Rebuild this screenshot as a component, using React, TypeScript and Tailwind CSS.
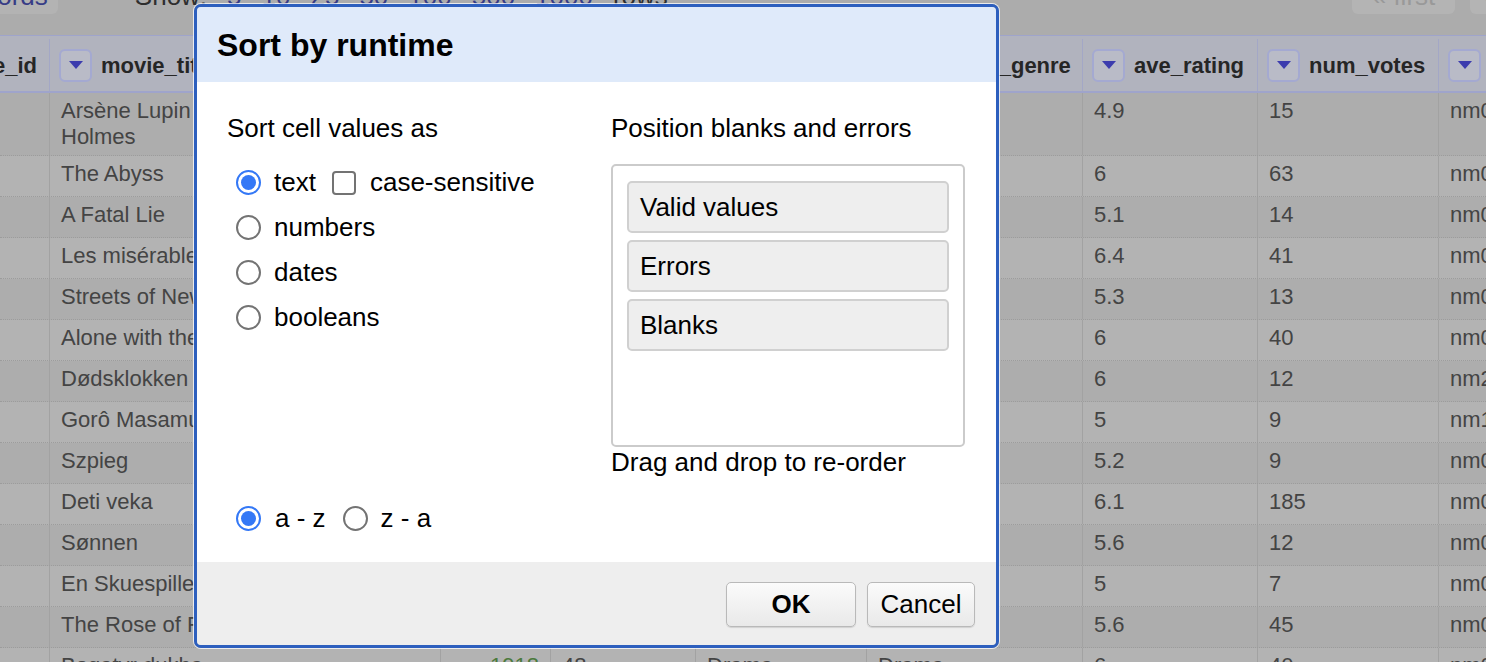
import React from 'react';

type Row = {
  title: string[];
  year: string;
  runtime: string;
  genre: string;
  primary: string;
  rating: string;
  votes: string;
  director: string;
};

const rows: Row[] = [
  { title: ['Arsène Lupin contra Sherlock', 'Holmes'], year: '1910', runtime: '50', genre: 'Crime', primary: 'Crime', rating: '4.9', votes: '15', director: 'nm0095714' },
  { title: ['The Abyss'], year: '1910', runtime: '45', genre: 'Drama', primary: 'Drama', rating: '6', votes: '63', director: 'nm0296651' },
  { title: ['A Fatal Lie'], year: '1911', runtime: '40', genre: 'Drama', primary: 'Drama', rating: '5.1', votes: '14', director: 'nm0088881' },
  { title: ['Les misérables'], year: '1913', runtime: '163', genre: 'Drama', primary: 'Drama', rating: '6.4', votes: '41', director: 'nm0141150' },
  { title: ['Streets of New York'], year: '1913', runtime: '50', genre: 'Drama', primary: 'Drama', rating: '5.3', votes: '13', director: 'nm0436187' },
  { title: ['Alone with the Devil'], year: '1914', runtime: '55', genre: 'Drama', primary: 'Drama', rating: '6', votes: '40', director: 'nm0052839' },
  { title: ['Dødsklokken'], year: '1914', runtime: '48', genre: 'Drama', primary: 'Drama', rating: '6', votes: '12', director: 'nm2181024' },
  { title: ['Gorô Masamune'], year: '1915', runtime: '60', genre: 'Action', primary: 'Action', rating: '5', votes: '9', director: 'nm1046797' },
  { title: ['Szpieg'], year: '1916', runtime: '40', genre: 'Drama', primary: 'Drama', rating: '5.2', votes: '9', director: 'nm0543003' },
  { title: ['Deti veka'], year: '1915', runtime: '48', genre: 'Drama', primary: 'Drama', rating: '6.1', votes: '185', director: 'nm0071779' },
  { title: ['Sønnen'], year: '1916', runtime: '52', genre: 'Drama', primary: 'Drama', rating: '5.6', votes: '12', director: 'nm0417021' },
  { title: ['En Skuespillerinde'], year: '1917', runtime: '60', genre: 'Drama', primary: 'Drama', rating: '5', votes: '7', director: 'nm0032014' },
  { title: ['The Rose of Rhodesia'], year: '1918', runtime: '58', genre: 'Drama', primary: 'Drama', rating: '5.6', votes: '45', director: 'nm0641052' },
  { title: ['Bogatyr dukha'], year: '1918', runtime: '48', genre: 'Drama', primary: 'Drama', rating: '6', votes: '40', director: 'nm0071779' },
];

function ColumnButton() {
  return (
    <span className="flex h-[33px] w-[33px] shrink-0 items-center justify-center rounded-[6px] border-2 border-[#a4a9d1] bg-[#b9bbc7]">
      <svg width="14" height="9" viewBox="0 0 14 9">
        <polygon points="0,0 14,0 7,8" fill="#3c3cae" />
      </svg>
    </span>
  );
}

function HeaderCell({ name, width }: { name: string; width: string }) {
  return (
    <div className={`${width} flex shrink-0 items-center gap-[9px] overflow-hidden whitespace-nowrap border-r border-[#a3a7c6] pl-[9px]`}>
      <ColumnButton />
      <span>{name}</span>
    </div>
  );
}

function Cell({ width, children, right }: { width: string; children?: React.ReactNode; right?: boolean }) {
  return (
    <div
      className={`${width} shrink-0 overflow-hidden whitespace-nowrap border-r border-[#a2a2a2] px-[11px] pt-[6px] leading-[24px] ${
        right ? 'text-right text-[#4b7a3c]' : ''
      }`}
    >
      {children}
    </div>
  );
}

function Radio({ checked }: { checked?: boolean }) {
  if (checked) {
    return (
      <span className="flex h-[25px] w-[25px] shrink-0 items-center justify-center rounded-full border-2 border-[#3478f6] bg-white">
        <span className="h-[15px] w-[15px] rounded-full bg-[#3478f6]" />
      </span>
    );
  }
  return <span className="block h-[25px] w-[25px] shrink-0 rounded-full border-2 border-[#737373] bg-white" />;
}

function SortDialog() {
  return (
    <div className="absolute left-[194px] top-[4px] z-10 flex h-[644px] w-[805px] flex-col overflow-hidden rounded-[7px] border-[3px] border-[#2d5fbe] text-black shadow-[0_0_0_1px_rgba(255,255,255,0.75)]">
      <div className="flex h-[75px] shrink-0 items-center bg-[#dfeafa] px-[20px]">
        <h1 className="text-[32px] font-bold">Sort by runtime</h1>
      </div>

      <div className="flex flex-1 flex-col bg-white px-[30px] pt-[31px] text-[26px]">
        <div className="grid grid-cols-[384px_354px]">
          <div>
            <div className="leading-[30px]">Sort cell values as</div>
            <div className="mt-[17px]">
              <label className="flex h-[45px] items-center">
                <span className="ml-[9px]"><Radio checked /></span>
                <span className="ml-[13px]">text</span>
                <span className="ml-[16px] h-[24px] w-[24px] rounded-[4px] border-2 border-[#737373] bg-white" />
                <span className="ml-[14px]">case-sensitive</span>
              </label>
              {['numbers', 'dates', 'booleans'].map((t) => (
                <label key={t} className="flex h-[45px] items-center">
                  <span className="ml-[9px]"><Radio /></span>
                  <span className="ml-[13px]">{t}</span>
                </label>
              ))}
            </div>
          </div>

          <div>
            <div className="leading-[30px]">Position blanks and errors</div>
            <div className="mt-[21px] h-[283px] rounded-[5px] border-2 border-[#cbcbcb] px-[14px] pt-[15px]">
              {['Valid values', 'Errors', 'Blanks'].map((t) => (
                <div key={t} className="mb-[7px] flex h-[52px] items-center rounded-[5px] border-2 border-[#d0d0d0] bg-[#eeeeee] pl-[11px]">
                  {t}
                </div>
              ))}
            </div>
            <div className="leading-[30px]">Drag and drop to re-order</div>
          </div>
        </div>

        <div className="mt-[26px] flex h-[30px] items-center">
          <span className="ml-[9px]"><Radio checked /></span>
          <span className="ml-[14px]">a - z</span>
          <span className="ml-[17px]"><Radio /></span>
          <span className="ml-[13px]">z - a</span>
        </div>
      </div>

      <div className="flex h-[83px] shrink-0 items-start justify-end gap-[11px] bg-[#eeeeee] pr-[21px] pt-[20px] text-[26px]">
        <button className="h-[45px] w-[130px] rounded-[5px] border border-[#b9b9b9] bg-linear-to-b from-[#fbfbfb] to-[#e9e9e9] font-bold shadow-[0_1px_1px_rgba(0,0,0,0.12)]">
          OK
        </button>
        <button className="h-[45px] w-[108px] rounded-[5px] border border-[#b9b9b9] bg-linear-to-b from-[#fbfbfb] to-[#e9e9e9] shadow-[0_1px_1px_rgba(0,0,0,0.12)]">
          Cancel
        </button>
      </div>
    </div>
  );
}

export default function App() {
  return (
    <div className="relative h-[662px] w-full overflow-hidden bg-[#acacac] font-['Liberation_Sans',Arial,sans-serif]">
      {/* toolbar, mostly scrolled off the top */}
      <div className="flex h-[35px] text-[26px]">
        <div className="-mt-[22px] flex h-[36px] flex-1 items-center">
          <span className="-ml-[59px] flex h-full items-center rounded-[6px] bg-[#b3b3b3] px-[10px] text-[#373c86]">Records</span>
          <div className="ml-[77px] flex items-center gap-[20px] text-[#2e2e2e]">
            <span>Show:</span>
            {['5', '10', '25', '50', '100', '500', '1000'].map((n) => (
              <span key={n} className="text-[#373c86]">{n}</span>
            ))}
            <span>rows</span>
          </div>
        </div>
        <div className="-mt-[22px] flex h-[36px] w-[134px] shrink-0 gap-[15px] overflow-hidden">
          <span className="flex h-full w-[103px] shrink-0 items-center justify-center rounded-[6px] bg-[#b4b4b4] text-[#999999]">« first</span>
          <span className="flex h-full w-[140px] shrink-0 items-center justify-center rounded-[6px] bg-[#b4b4b4] text-[#999999]">‹ previous</span>
        </div>
      </div>

      {/* data table */}
      <div className="w-[1640px] text-[22px]">
        <div className="flex h-[58px] border-b-2 border-t border-[#9fa4cb] bg-[#b1b3be] pt-[3px] font-bold text-[#262626]">
          <div className="flex w-[50px] shrink-0 items-center justify-end gap-[9px] overflow-hidden whitespace-nowrap border-r border-[#a3a7c6] pr-[12px]">
            <ColumnButton />
            <span>movie_id</span>
          </div>
          <HeaderCell name="movie_title" width="w-[391px]" />
          <HeaderCell name="year" width="w-[110px]" />
          <HeaderCell name="runtime" width="w-[145px]" />
          <HeaderCell name="genre" width="w-[171px]" />
          <HeaderCell name="primary_genre" width="w-[216px]" />
          <HeaderCell name="ave_rating" width="w-[175px]" />
          <HeaderCell name="num_votes" width="w-[181px]" />
          <HeaderCell name="director_id" width="w-[200px]" />
        </div>

        {rows.map((r, i) => (
          <div
            key={i}
            className={`flex border-b border-dotted border-[#9c9c9c] text-[#444444] ${r.title.length > 1 ? 'h-[63px]' : 'h-[41px]'} ${
              i % 2 === 0 ? 'bg-[#adadad]' : 'bg-[#b3b3b3]'
            }`}
          >
            <Cell width="w-[50px]" />
            <Cell width="w-[391px]">
              {r.title.map((line, j) => (
                <div key={line} className={j > 0 ? 'mt-[2px]' : ''}>{line}</div>
              ))}
            </Cell>
            <Cell width="w-[110px]" right>{r.year}</Cell>
            <Cell width="w-[145px]">{r.runtime}</Cell>
            <Cell width="w-[171px]">{r.genre}</Cell>
            <Cell width="w-[216px]">{r.primary}</Cell>
            <Cell width="w-[175px]">{r.rating}</Cell>
            <Cell width="w-[181px]">{r.votes}</Cell>
            <Cell width="w-[200px]">{r.director}</Cell>
          </div>
        ))}
      </div>

      <SortDialog />
    </div>
  );
}
